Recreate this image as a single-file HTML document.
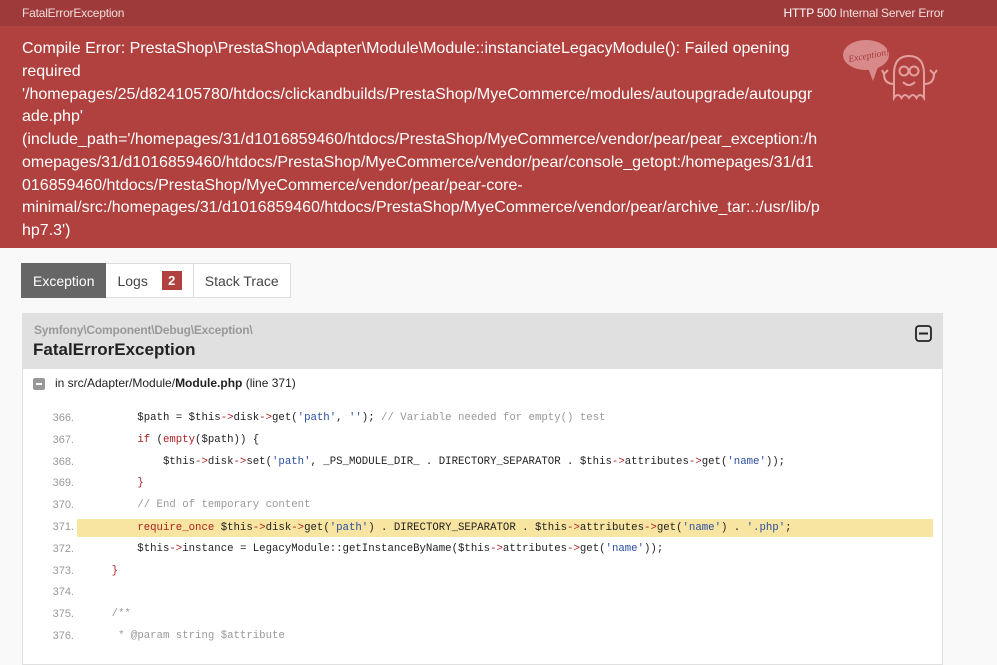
<!DOCTYPE html>
<html><head><meta charset="utf-8"><style>
body{margin:0;background:#f9f9f9;font-family:"Liberation Sans",Arial,sans-serif;color:#222;width:997px;height:665px;overflow:hidden;position:relative}
.top{position:absolute;left:0;top:0;width:997px;height:26px;background:#9f3a3a;color:#f1dcdc;font-size:12px;line-height:26px}
.top .l{position:absolute;left:22px;letter-spacing:-0.2px}
.top .r{position:absolute;right:53px;letter-spacing:-0.2px}
.top .r b{font-weight:normal;color:#fff}
.msg{position:absolute;left:0;top:26px;width:997px;height:222px;background:#b0413e;color:#fff;font-size:16px;line-height:22.75px}
.msg div{position:absolute;left:22px;top:12px;white-space:pre}
.tabs{position:absolute;left:21px;top:263px;height:35px;display:flex;font-size:14px}
.tab{height:33px;line-height:34px;border:1px solid #ddd;background:#fff;padding:0 11px;color:#444}
.tab.a{background:#666;color:#fff;border-color:#666;}
.badge{display:inline-block;background:#b0413e;color:#fff;font-weight:bold;font-size:13px;width:20px;height:19px;line-height:19px;text-align:center;margin-left:10px;vertical-align:1px}
.box{position:absolute;left:22px;top:313px;width:919px;height:350px;border:1px solid #e0e0e0;background:#fff}
.hd{height:55px;background:#e0e0e0;position:relative}
.ns{position:absolute;left:11px;top:9px;font-size:12px;color:#999;font-weight:bold;letter-spacing:-0.2px}
.cls{position:absolute;left:10px;top:26px;font-size:17px;font-weight:bold;color:#222}
.file{position:absolute;left:32px;top:62px;font-size:12px;color:#222}
.mi{position:absolute;left:10px;top:64px;width:12px;height:12px;background:#999;border-radius:2px}
.mi:after{content:"";position:absolute;left:3px;top:5px;width:6px;height:2px;background:#fff}
.code{position:absolute;left:0;top:94px;width:919px;font-family:"Liberation Mono",monospace;font-size:10.7px}
.ln{position:relative;height:21.8px;line-height:21.8px;white-space:pre}
.ln .n{position:absolute;right:868px;font-family:"Liberation Sans",sans-serif;color:#999;font-size:11px}
.ln .c{position:absolute;left:63px;color:#222}
.ln.h .c{background:#f7e5a1;left:54px;width:847px;top:2px;height:18px;line-height:18px;padding-left:9px}
.k{color:#a22}.s{color:#2a4da0}.cm{color:#999}.o{color:#a22}
</style></head><body>
<div class="top"><span class="l">FatalErrorException</span><span class="r"><b>HTTP 500</b> Internal Server Error</span></div>
<div class="msg"><div>Compile Error: PrestaShop\PrestaShop\Adapter\Module\Module::instanciateLegacyModule(): Failed opening
required
'/homepages/25/d824105780/htdocs/clickandbuilds/PrestaShop/MyeCommerce/modules/autoupgrade/autoupgr
ade.php'
(include_path='/homepages/31/d1016859460/htdocs/PrestaShop/MyeCommerce/vendor/pear/pear_exception:/h
omepages/31/d1016859460/htdocs/PrestaShop/MyeCommerce/vendor/pear/console_getopt:/homepages/31/d1
016859460/htdocs/PrestaShop/MyeCommerce/vendor/pear/pear-core-
minimal/src:/homepages/31/d1016859460/htdocs/PrestaShop/MyeCommerce/vendor/pear/archive_tar:.:/usr/lib/p
hp7.3')</div>
<svg style="position:absolute;left:842px;top:10px" width="105" height="72" viewBox="0 0 105 72" fill="none" stroke="#e3a0a0" stroke-width="2">
<ellipse cx="24" cy="19" rx="23" ry="15" fill="#d88a8a" stroke="none"/>
<path d="M26 32 L31 45 L36 31" fill="#d88a8a" stroke="none"/>
<text x="6" y="23" font-size="9.5" fill="#a83b3b" stroke="none" font-family="Liberation Serif" font-style="italic" transform="rotate(-10 24 19)">Exception!</text>
<path d="M52 62 L52 38 Q52 20 67 20 Q82 20 82 38 L82 62 Q78 56 74.5 62 Q71 56 67 62 Q63 56 59.5 62 Q56 56 52 62Z"/>
<circle cx="62" cy="35" r="4.5"/><circle cx="72" cy="35" r="4.5"/>
<path d="M61 46 Q67 52 73 46"/>
<path d="M52 48 Q42 48 42 38 M40 34 L42 38 L46 34 M82 48 Q92 48 92 38 M88 34 L92 38 L95 34"/>
</svg>
</div>
<div class="tabs"><div class="tab a">Exception</div><div class="tab" style="border-left:none">Logs <span class="badge">2</span></div><div class="tab" style="border-left:none">Stack Trace</div></div>
<div class="box">
<div class="hd"><div class="ns">Symfony\Component\Debug\Exception\</div><div class="cls">FatalErrorException</div>
<svg style="position:absolute;left:892px;top:11px" width="17" height="17" viewBox="0 0 17 17"><rect x="1" y="1" width="15" height="15" rx="3" fill="none" stroke="#222" stroke-width="1.8"/><rect x="4" y="7.5" width="9" height="2" fill="#222"/></svg></div>
<div class="mi"></div>
<div class="file">in src/Adapter/Module/<b>Module.php</b> (line 371)</div>
<div class="code">
<div class="ln"><span class="n">366.</span><span class="c">        $path = $this<span class="o">-&gt;</span>disk<span class="o">-&gt;</span>get(<span class="s">'path'</span>, <span class="s">''</span>); <span class="cm">// Variable needed for empty() test</span></span></div>
<div class="ln"><span class="n">367.</span><span class="c">        <span class="k">if</span> (<span class="k">empty</span>($path)) {</span></div>
<div class="ln"><span class="n">368.</span><span class="c">            $this<span class="o">-&gt;</span>disk<span class="o">-&gt;</span>set(<span class="s">'path'</span>, _PS_MODULE_DIR_ . DIRECTORY_SEPARATOR . $this<span class="o">-&gt;</span>attributes<span class="o">-&gt;</span>get(<span class="s">'name'</span>));</span></div>
<div class="ln"><span class="n">369.</span><span class="c">        <span class="k">}</span></span></div>
<div class="ln"><span class="n">370.</span><span class="c">        <span class="cm">// End of temporary content</span></span></div>
<div class="ln h"><span class="n">371.</span><span class="c">        <span class="k">require_once</span> $this<span class="o">-&gt;</span>disk<span class="o">-&gt;</span>get(<span class="s">'path'</span>) . DIRECTORY_SEPARATOR . $this<span class="o">-&gt;</span>attributes<span class="o">-&gt;</span>get(<span class="s">'name'</span>) . <span class="s">'.php'</span>;</span></div>
<div class="ln"><span class="n">372.</span><span class="c">        $this<span class="o">-&gt;</span>instance = LegacyModule::getInstanceByName($this<span class="o">-&gt;</span>attributes<span class="o">-&gt;</span>get(<span class="s">'name'</span>));</span></div>
<div class="ln"><span class="n">373.</span><span class="c">    <span class="k">}</span></span></div>
<div class="ln"><span class="n">374.</span><span class="c"></span></div>
<div class="ln"><span class="n">375.</span><span class="c">    <span class="cm">/**</span></span></div>
<div class="ln"><span class="n">376.</span><span class="c">     <span class="cm">* @param string $attribute</span></span></div>
</div>
</div>
</body></html>
